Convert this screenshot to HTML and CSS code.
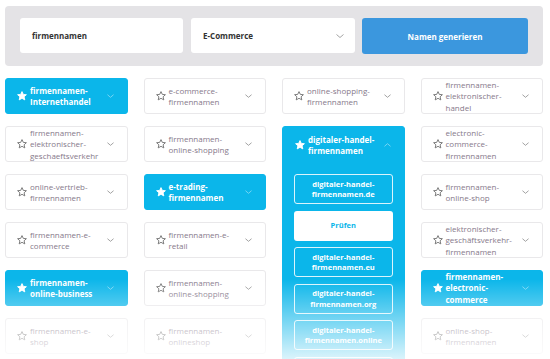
FILE: index.html
```html
<!DOCTYPE html>
<html>
  <head>
    <title>Firmennamen Generator</title>
    <link rel="stylesheet" href="styles.css">
  </head>
  <body>
    <svg width="0" height="0" class="defs">
      <defs>
        <path id="star" d="M5 0.6 L6.3 3.4 L9.4 3.7 L7.1 5.8 L7.8 8.9 L5 7.3 L2.2 8.9 L2.9 5.8 L0.6 3.7 L3.7 3.4 Z"/>
        <path id="chev" d="M0.5 0.5 L4 3.5 L7.5 0.5"/>
      </defs>
    </svg>

    <div class="page">
      <form class="search">
        <div class="field">firmennamen</div>
        <div class="field select">
          <span>E-Commerce</span>
          <svg class="chev" viewBox="0 0 8 4"><use href="#chev"/></svg>
        </div>
        <button type="button">Namen generieren</button>
      </form>

      <div class="names">
        <div class="name active">
          <svg class="star" viewBox="0 0 10 10"><use href="#star"/></svg>
          <span class="label">firmennamen-<br>Internethandel</span>
          <svg class="chev" viewBox="0 0 8 4"><use href="#chev"/></svg>
        </div>
        <div class="name">
          <svg class="star" viewBox="0 0 10 10"><use href="#star"/></svg>
          <span class="label">e-commerce-<br>firmennamen</span>
          <svg class="chev" viewBox="0 0 8 4"><use href="#chev"/></svg>
        </div>
        <div class="name">
          <svg class="star" viewBox="0 0 10 10"><use href="#star"/></svg>
          <span class="label">online-shopping-<br>firmennamen</span>
          <svg class="chev" viewBox="0 0 8 4"><use href="#chev"/></svg>
        </div>
        <div class="name">
          <svg class="star" viewBox="0 0 10 10"><use href="#star"/></svg>
          <span class="label">firmennamen-<br>elektronischer-<br>handel</span>
          <svg class="chev" viewBox="0 0 8 4"><use href="#chev"/></svg>
        </div>

        <div class="name">
          <svg class="star" viewBox="0 0 10 10"><use href="#star"/></svg>
          <span class="label">firmennamen-<br>elektronischer-<br>geschaeftsverkehr</span>
          <svg class="chev" viewBox="0 0 8 4"><use href="#chev"/></svg>
        </div>
        <div class="name">
          <svg class="star" viewBox="0 0 10 10"><use href="#star"/></svg>
          <span class="label">firmennamen-<br>online-shopping</span>
          <svg class="chev" viewBox="0 0 8 4"><use href="#chev"/></svg>
        </div>

        <div class="name open">
          <div class="name-head">
            <svg class="star" viewBox="0 0 10 10"><use href="#star"/></svg>
            <span class="label">digitaler-handel-<br>firmennamen</span>
            <svg class="chev up" viewBox="0 0 8 4"><use href="#chev"/></svg>
          </div>
          <ul class="domains">
            <li>digitaler-handel-<br>firmennamen.de</li>
            <li class="check">Prüfen</li>
            <li>digitaler-handel-<br>firmennamen.eu</li>
            <li>digitaler-handel-<br>firmennamen.org</li>
            <li>digitaler-handel-<br>firmennamen.online</li>
            <li></li>
          </ul>
        </div>

        <div class="name">
          <svg class="star" viewBox="0 0 10 10"><use href="#star"/></svg>
          <span class="label">electronic-<br>commerce-<br>firmennamen</span>
          <svg class="chev" viewBox="0 0 8 4"><use href="#chev"/></svg>
        </div>

        <div class="name">
          <svg class="star" viewBox="0 0 10 10"><use href="#star"/></svg>
          <span class="label">online-vertrieb-<br>firmennamen</span>
          <svg class="chev" viewBox="0 0 8 4"><use href="#chev"/></svg>
        </div>
        <div class="name active">
          <svg class="star" viewBox="0 0 10 10"><use href="#star"/></svg>
          <span class="label">e-trading-<br>firmennamen</span>
          <svg class="chev" viewBox="0 0 8 4"><use href="#chev"/></svg>
        </div>
        <div class="name">
          <svg class="star" viewBox="0 0 10 10"><use href="#star"/></svg>
          <span class="label">firmennamen-<br>online-shop</span>
          <svg class="chev" viewBox="0 0 8 4"><use href="#chev"/></svg>
        </div>

        <div class="name">
          <svg class="star" viewBox="0 0 10 10"><use href="#star"/></svg>
          <span class="label">firmennamen-e-<br>commerce</span>
          <svg class="chev" viewBox="0 0 8 4"><use href="#chev"/></svg>
        </div>
        <div class="name">
          <svg class="star" viewBox="0 0 10 10"><use href="#star"/></svg>
          <span class="label">firmennamen-e-<br>retail</span>
          <svg class="chev" viewBox="0 0 8 4"><use href="#chev"/></svg>
        </div>
        <div class="name">
          <svg class="star" viewBox="0 0 10 10"><use href="#star"/></svg>
          <span class="label">elektronischer-<br>geschäftsverkehr-<br>firmennamen</span>
          <svg class="chev" viewBox="0 0 8 4"><use href="#chev"/></svg>
        </div>

        <div class="name active">
          <svg class="star" viewBox="0 0 10 10"><use href="#star"/></svg>
          <span class="label">firmennamen-<br>online-business</span>
          <svg class="chev" viewBox="0 0 8 4"><use href="#chev"/></svg>
        </div>
        <div class="name">
          <svg class="star" viewBox="0 0 10 10"><use href="#star"/></svg>
          <span class="label">firmennamen-<br>online-shopping</span>
          <svg class="chev" viewBox="0 0 8 4"><use href="#chev"/></svg>
        </div>
        <div class="name active">
          <svg class="star" viewBox="0 0 10 10"><use href="#star"/></svg>
          <span class="label">firmennamen-<br>electronic-<br>commerce</span>
          <svg class="chev" viewBox="0 0 8 4"><use href="#chev"/></svg>
        </div>

        <div class="name">
          <svg class="star" viewBox="0 0 10 10"><use href="#star"/></svg>
          <span class="label">firmennamen-e-<br>shop</span>
          <svg class="chev" viewBox="0 0 8 4"><use href="#chev"/></svg>
        </div>
        <div class="name">
          <svg class="star" viewBox="0 0 10 10"><use href="#star"/></svg>
          <span class="label">firmennamen-<br>onlineshop</span>
          <svg class="chev" viewBox="0 0 8 4"><use href="#chev"/></svg>
        </div>
        <div class="name">
          <svg class="star" viewBox="0 0 10 10"><use href="#star"/></svg>
          <span class="label">online-shop-<br>firmennamen</span>
          <svg class="chev" viewBox="0 0 8 4"><use href="#chev"/></svg>
        </div>
      </div>
    </div>
    <div class="fade"></div>
  </body>
</html>
```

FILE: styles.css
```css
* {
  font-family: 'Open Sans', sans-serif;
  box-sizing: border-box;
}

body, html {
  margin: 0;
  padding: 0;
}

body {
  height: 359px;
  overflow: hidden;
  background-color: #fff;
}

.defs {
  position: absolute;
}

.page {
  padding: 6px 7px 0 5px;
}

.search {
  display: grid;
  grid-template-columns: 163px 164px 1fr;
  column-gap: 8px;
  margin: 0;
  padding: 12px 15px 12px 15px;
  background-color: #e4e3e6;
  border-radius: 4px;
}

.field {
  height: 35px;
  display: flex;
  align-items: center;
  justify-content: space-between;
  padding: 0 11px 0 12px;
  background-color: #fff;
  border-radius: 3px;
  font-size: 8px;
  font-weight: 700;
  color: #333;
}

.field .chev {
  width: 8px;
  height: 4px;
  stroke: #9a9a9a;
}

.search button {
  height: 36px;
  margin-left: -1px;
  border: none;
  border-radius: 3px;
  background-color: #3b97de;
  color: #fff;
  font-size: 8px;
  font-weight: 700;
}

.names {
  display: grid;
  grid-template-columns: repeat(4, 1fr);
  grid-auto-rows: 36px;
  column-gap: 16px;
  row-gap: 12px;
  margin-top: 12px;
}

.name {
  display: flex;
  align-items: center;
  padding: 0 13px 0 11px;
  border: 1px solid #e9e8ea;
  border-radius: 3px;
  background-color: #fff;
  color: #86798a;
  font-size: 8px;
  line-height: 11.5px;
  overflow: hidden;
}

.label {
  flex: 1;
}

.star {
  width: 10px;
  height: 10px;
  margin-right: 3px;
  flex-shrink: 0;
  fill: none;
  stroke: #6f6f6f;
  stroke-width: 0.9;
  stroke-linejoin: round;
}

.chev {
  width: 7px;
  height: 4px;
  flex-shrink: 0;
  fill: none;
  stroke: #8a8a8a;
  stroke-width: 0.9;
}

.name.active,
.name.open {
  background-color: #0bb6ea;
  border-color: #0bb6ea;
  color: #fff;
  font-weight: 700;
}

.name.active .star,
.name.open .star {
  fill: #fff;
  stroke: #fff;
}

.name.active .chev,
.name.open .chev {
  stroke: #8fdcf6;
}

.chev.up {
  transform: rotate(180deg);
}

.name.open {
  grid-column: 3;
  grid-row: 2 / span 6;
  display: block;
  padding: 0 11px;
}

.name-head {
  height: 36px;
  display: flex;
  align-items: center;
  padding: 0 2px 0 1px;
}

.domains {
  list-style: none;
  margin: 11px 0 0;
  padding: 0;
  display: flex;
  flex-direction: column;
  gap: 6.6px;
}

.domains li {
  height: 30px;
  display: flex;
  align-items: center;
  justify-content: center;
  text-align: center;
  border: 1px solid rgba(255, 255, 255, 0.85);
  border-radius: 3px;
  font-size: 7.5px;
  line-height: 10.5px;
}

.domains li.check {
  background-color: #fff;
  color: #0bb6ea;
}

.fade {
  position: absolute;
  left: 0;
  right: 0;
  bottom: 0;
  height: 80px;
  background: linear-gradient(to bottom, rgba(255, 255, 255, 0), rgba(255, 255, 255, 0.85));
  pointer-events: none;
}
```
